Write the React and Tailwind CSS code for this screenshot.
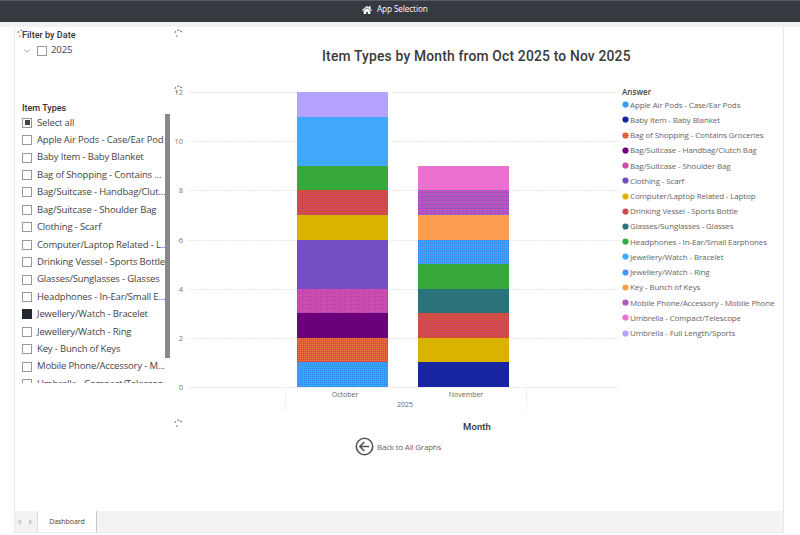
import React, { useState } from 'react';
import { FaHome } from 'react-icons/fa';
import { FiChevronDown } from 'react-icons/fi';

const ANSWERS = [
  { name: 'Apple Air Pods - Case/Ear Pods', label: 'Apple Air Pods - Case/Ear Pod', fill: 'url(#airpods)' },
  { name: 'Baby Item - Baby Blanket', fill: '#1726a0' },
  { name: 'Bag of Shopping - Contains Groceries', label: 'Bag of Shopping - Contains ...', fill: 'url(#shopping)' },
  { name: 'Bag/Suitcase - Handbag/Clutch Bag', label: 'Bag/Suitcase - Handbag/Clut...', fill: '#6b007b' },
  { name: 'Bag/Suitcase - Shoulder Bag', fill: 'url(#shoulder)' },
  { name: 'Clothing - Scarf', fill: '#744ec2' },
  { name: 'Computer/Laptop Related - Laptop', label: 'Computer/Laptop Related - L...', fill: '#d9b300' },
  { name: 'Drinking Vessel - Sports Bottle', fill: 'url(#bottle)' },
  { name: 'Glasses/Sunglasses - Glasses', fill: '#2a737a' },
  { name: 'Headphones - In-Ear/Small Earphones', label: 'Headphones - In-Ear/Small E...', fill: '#37a93a' },
  { name: 'Jewellery/Watch - Bracelet', fill: '#41a9fb' },
  { name: 'Jewellery/Watch - Ring', fill: 'url(#ring)' },
  { name: 'Key - Bunch of Keys', fill: '#fb9e52' },
  { name: 'Mobile Phone/Accessory - Mobile Phone', label: 'Mobile Phone/Accessory - M...', fill: 'url(#mobile)' },
  { name: 'Umbrella - Compact/Telescope', fill: '#ec70d0' },
  { name: 'Umbrella - Full Length/Sports', fill: '#b5a1ff' },
];

// [answer index, count], bottom to top
const MONTHS = [
  { name: 'October', x: 127, stack: [[0, 1], [2, 1], [3, 1], [4, 1], [5, 2], [6, 1], [7, 1], [9, 1], [10, 2], [15, 1]] },
  { name: 'November', x: 248, stack: [[1, 1], [6, 1], [7, 1], [8, 1], [9, 1], [11, 1], [12, 1], [13, 1], [14, 1]] },
];

const BASE = 307;
const UNIT = 24.58;

const Dither = ({ id, base, w, h, dots }) => (
  <pattern id={id} width={w} height={h} patternUnits="userSpaceOnUse" shapeRendering="crispEdges">
    <rect width={w} height={h} fill={base} />
    {dots.map(([x, y, color]) => (
      <rect key={`${x}-${y}`} x={x} y={y} width="1" height="1" fill={color} />
    ))}
  </pattern>
);

const Patterns = () => (
  <defs>
    <Dither id="airpods" base="#34a8fc" w={4} h={4} dots={[[0, 0, '#3381e0'], [2, 0, '#3381e0'], [0, 2, '#3381e0'], [2, 2, '#3381e0']]} />
    <Dither id="shopping" base="#dd5142" w={4} h={4} dots={[[0, 0, '#ee8247'], [2, 0, '#ee8247'], [0, 2, '#ee8247'], [2, 2, '#dc8a2a']]} />
    <Dither id="shoulder" base="#cc4db4" w={6} h={4} dots={[[0, 0, '#a338a2'], [3, 0, '#a338a2'], [1, 2, '#a338a2'], [4, 2, '#cf4c8c']]} />
    <Dither id="bottle" base="#d64d42" w={4} h={4} dots={[[0, 0, '#b0405f'], [2, 2, '#b0405f']]} />
    <Dither id="ring" base="#34a8fc" w={4} h={4} dots={[[0, 0, '#3f83e2'], [2, 0, '#3f83e2'], [0, 2, '#626ad4'], [2, 2, '#3f83e2']]} />
    <Dither id="mobile" base="#cc50bb" w={4} h={4} dots={[[0, 0, '#8a4fc0'], [2, 0, '#8a4fc0'], [1, 1, '#a04fc0'], [0, 2, '#8a4fc0'], [2, 2, '#9478d4'], [3, 3, '#a04fc0']]} />
  </defs>
);

const Spinner = ({ className }) => (
  <svg className={`absolute ${className}`} width="9" height="9" viewBox="0 0 9 9" fill="none" stroke="#666" strokeWidth="1.1">
    <path d="M0.8 3.8 L1.8 2.3 M3.2 1.2 L5.3 1.2 M6.4 1.8 L7.8 3 M2.2 6.8 L3.4 7.4" />
  </svg>
);

const CheckBox = ({ state }) => (
  <span className="flex h-[10px] w-[10px] shrink-0 items-center justify-center border border-[#999] bg-white">
    {state === 'partial' && <span className="h-[5px] w-[5px] bg-[#444]" />}
    {state === 'checked' && <span className="h-[10px] w-[10px] shrink-0 bg-[#25282f]" />}
  </span>
);

const Slicer = () => {
  const [checked, setChecked] = useState([10]);

  const toggle = (i) => {
    setChecked(prev => (prev.includes(i) ? prev.filter(n => n !== i) : [...prev, i]));
  };

  return (
    <aside className="relative flex w-[155px] shrink-0 flex-col pl-[7px]">
      <Spinner className="left-[2px] top-[2px]" />
      <h2 className="mt-[2px] h-[12px] text-[9px] font-medium leading-[12px] tracking-[0.04px] text-[#333] font-['Roboto']">Filter by Date</h2>
      <div className="mt-[3px] flex h-[13px] items-center text-[9.5px]">
        <FiChevronDown className="mr-[5px] h-[10px] w-[10px] text-[#888]" />
        <CheckBox />
        <span className="ml-[4px] tracking-[-0.1px]">2025</span>
      </div>

      <h2 className="mt-[45px] h-[12px] text-[9px] font-medium leading-[12px] tracking-[-0.02px] text-[#333] font-['Roboto']">Item Types</h2>
      <div className="flex h-[269px] justify-between">
        <ul className="w-[144px] overflow-hidden">
          <li className="flex h-[17.43px] items-center whitespace-nowrap text-[9.5px] tracking-[-0.16px]">
            <CheckBox state="partial" />
            <span className="ml-[5px]">Select all</span>
          </li>
          {ANSWERS.slice(0, 15).map((answer, i) => (
            <li key={answer.name} onClick={() => toggle(i)} className="flex h-[17.43px] items-center whitespace-nowrap text-[9.5px] tracking-[-0.16px]">
              <CheckBox state={checked.includes(i) ? 'checked' : ''} />
              <span className="ml-[5px]">{answer.label || answer.name}</span>
            </li>
          ))}
        </ul>
        <div className="h-[244px] w-[5px] bg-[#8a8886]" />
      </div>
    </aside>
  );
};

const Chart = () => (
  <svg width="450" height="331" viewBox="0 0 450 331" className="shrink-0">
    <Patterns />
    {[0, 2, 4, 6, 8, 10, 12].map(tick => {
      const y = Math.round(BASE - tick * UNIT);
      return (
        <g key={tick}>
          <line x1="18" x2="450" y1={y + 0.5} y2={y + 0.5} stroke="#e8e8e8" strokeDasharray="2 1" />
          <text x="13" y={y + 3} textAnchor="end" fontSize="7.5" fill="#777">{tick}</text>
        </g>
      );
    })}
    {[115.5, 356.5].map(x => (
      <line key={x} x1={x} x2={x} y1="309" y2="330" stroke="#e8e8e8" strokeDasharray="2 1" />
    ))}
    {MONTHS.map(month => {
      let total = 0;
      return (
        <g key={month.name}>
          {month.stack.map(([index, count]) => {
            const bottom = Math.round(BASE - total * UNIT);
            total += count;
            const top = Math.round(BASE - total * UNIT);
            return <rect key={index} x={month.x} y={top} width="91" height={bottom - top} fill={ANSWERS[index].fill} />;
          })}
          <text x={month.x + 48} y="317" textAnchor="middle" fontSize="7" fill="#666">{month.name}</text>
        </g>
      );
    })}
    <text x="235" y="327" textAnchor="middle" fontSize="7" fill="#666">2025</text>
  </svg>
);

const Legend = () => (
  <div className="ml-[2px] pt-[6px]">
    <h3 className="h-[11px] text-[8px] font-semibold leading-[11px] tracking-[0.05px] text-[#444]">Answer</h3>
    <ul>
      {ANSWERS.map(answer => (
        <li key={answer.name} className="flex h-[15.24px] items-center whitespace-nowrap text-[8px] tracking-[-0.13px] text-[#666]">
          <svg width="7" height="7" className="mr-[1px] shrink-0">
            <circle cx="3.5" cy="3.5" r="3.1" fill={answer.fill} />
          </svg>
          {answer.name}
        </li>
      ))}
    </ul>
  </div>
);

const App = () => (
  <div className="h-[535px] w-[800px] overflow-hidden bg-white font-['Open_Sans','Noto_Sans',sans-serif] text-[#444]">
    <header className="flex h-[22px] items-center border-t border-[#555c60] bg-[#343a40] pb-[4px] pl-[362px] text-[8.2px] tracking-[-0.1px] text-white">
      <FaHome className="mr-[5px] h-[10px] w-[10px]" />
      App Selection
    </header>
    <div className="h-[5px] bg-[#f1f1f1]" />

    <div className="ml-[14px] flex h-[506px] w-[770px] flex-col border-x border-b border-[#e8e8e8]">
      <div className="flex h-[484px]">
        <Slicer />
        <main className="relative flex w-[613px] flex-col">
          <Spinner className="left-[4px] top-[2px]" />
          <Spinner className="left-[4px] top-[58px]" />
          <Spinner className="left-[4px] top-[392px]" />
          <h1 className="ml-[152px] h-[53px] origin-left scale-x-[0.893] whitespace-nowrap pt-[19px] text-[15.5px] font-medium leading-[20px] tracking-[0.2px] text-[#3a3a3a] font-['Roboto']">
            Item Types by Month from Oct 2025 to Nov 2025
          </h1>
          <div className="flex h-[331px]">
            <Chart />
            <Legend />
          </div>
          <div className="mt-[9px] h-[14px] pl-[293px] text-[9.5px] font-medium leading-[14px] tracking-[0.1px] text-[#333] font-['Roboto']">Month</div>
          <button className="ml-[185px] mt-[3px] flex h-[19px] w-[100px] items-center whitespace-nowrap text-[8px] tracking-[-0.2px] text-[#666]">
            <svg width="19" height="19" viewBox="0 0 19 19" fill="none" stroke="#555" strokeWidth="1.6" className="mr-[3px] shrink-0">
              <circle cx="9.5" cy="9.5" r="8.2" />
              <path d="M14.2 9.5 H5 M9.3 5 L4.8 9.5 L9.3 14" />
            </svg>
            Back to All Graphs
          </button>
        </main>
      </div>

      <footer className="flex h-[21px] items-stretch bg-[#f3f3f3]">
        <div className="flex w-[23px] items-center justify-between border-r border-[#ddd] pl-[2px] pr-[4px]">
          <svg width="4" height="6" fill="none" stroke="#c4c4c4"><path d="M3.5 0.7 L0.7 3 L3.5 5.3 Z" /></svg>
          <svg width="4" height="6" fill="none" stroke="#c4c4c4"><path d="M0.5 0.7 L3.3 3 L0.5 5.3 Z" /></svg>
        </div>
        <div className="flex w-[59px] items-center justify-center border-r border-[#c8c8c8] bg-white pt-[2px] text-[7px] tracking-[-0.05px] text-[#444]">Dashboard</div>
      </footer>
    </div>
  </div>
);

export default App;
